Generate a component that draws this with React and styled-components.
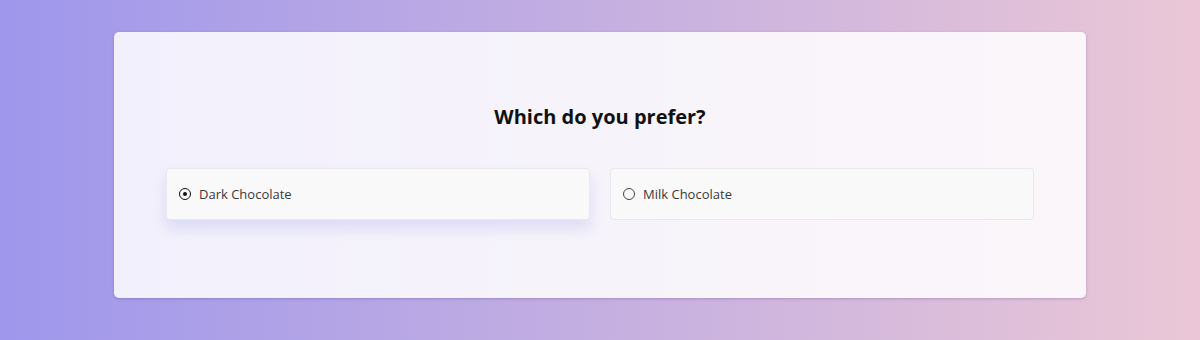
import React, { useState } from "react";
import styled, { createGlobalStyle } from "styled-components";

const GlobalStyle = createGlobalStyle`
  * { box-sizing: border-box; }
  html, body {
    margin: 0;
    padding: 0;
  }
  body {
    font-family: "Open Sans", "Noto Sans", sans-serif;
    background: linear-gradient(90deg, #9e97ec 0%, #ebc7d6 100%);
    min-height: 340px;
  }
`;

const Page = styled.div`
  min-height: 340px;
  padding: 32px 114px 42px;
`;

const Card = styled.div`
  background: rgba(255, 255, 255, 0.85);
  border-radius: 5px;
  box-shadow: 0 1px 3px rgba(60, 40, 120, 0.25);
  padding: 72px 52px 78px;
`;

const Title = styled.h2`
  margin: 0 0 38px;
  text-align: center;
  font-size: 20px;
  line-height: 26px;
  font-weight: 700;
  color: #111;
`;

const Options = styled.div`
  display: grid;
  grid-template-columns: 1fr 1fr;
  gap: 20px;
`;

const Option = styled.label`
  display: flex;
  align-items: center;
  gap: 8px;
  height: 52px;
  padding: 0 12px;
  background: #f9f9f9;
  border: 1px solid #e9e8ee;
  border-radius: 4px;
  cursor: pointer;
  font-size: 13px;
  color: #3a3a3a;
  box-shadow: ${({ $active }) =>
    $active ? "0 9px 14px 0 rgba(110, 110, 220, 0.17)" : "none"};
`;

const Radio = styled.span`
  width: 12px;
  height: 12px;
  border-radius: 50%;
  border: ${({ $checked }) => ($checked ? "1.8px solid #111" : "1px solid #444")};
  display: flex;
  align-items: center;
  justify-content: center;
  &::after {
    content: "";
    width: 4.5px;
    height: 4.5px;
    border-radius: 50%;
    background: #111;
    display: ${({ $checked }) => ($checked ? "block" : "none")};
  }
`;

const choices = ["Dark Chocolate", "Milk Chocolate"];

export default function App() {
  const [picked, setPicked] = useState(choices[0]);

  return (
    <>
      <GlobalStyle />
      <Page>
        <Card>
          <Title>Which do you prefer?</Title>
          <Options>
            {choices.map((c) => (
              <Option key={c} $active={picked === c} onClick={() => setPicked(c)}>
                <Radio $checked={picked === c} />
                {c}
              </Option>
            ))}
          </Options>
        </Card>
      </Page>
    </>
  );
}
